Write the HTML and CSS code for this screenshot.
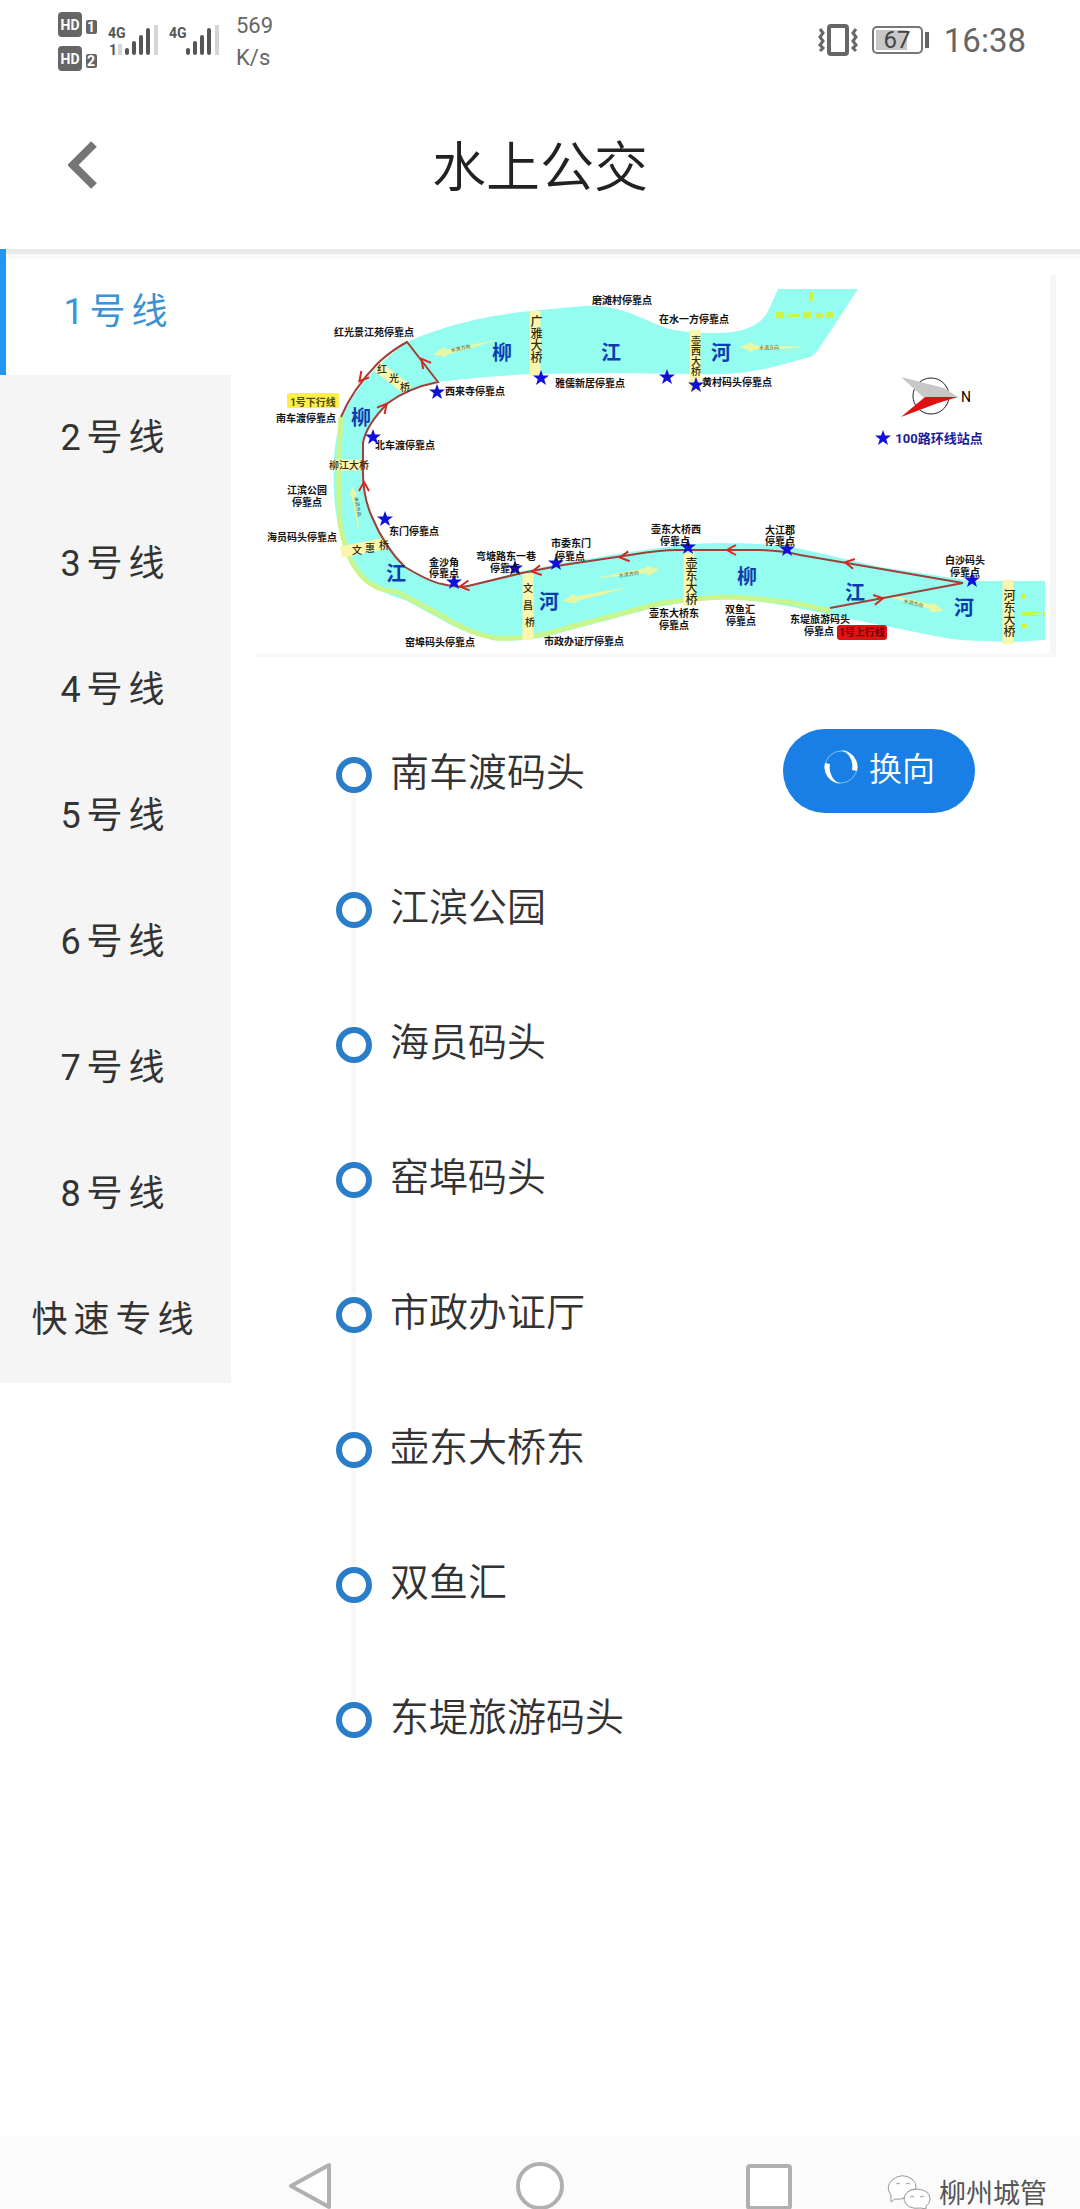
FILE: index.html
```html
<!DOCTYPE html>
<html lang="zh-CN">
<head>
  <meta charset="UTF-8">
  <meta name="viewport" content="width=device-width, initial-scale=1.0">
  <title>水上公交</title>
  <link rel="stylesheet" href="styles.css">
</head>
<body>
  <div class="statusbar">
    <div class="status-left">
      <svg class="hd" width="40" height="60" viewBox="0 0 40 60">
        <rect x="0" y="0" width="24" height="25" rx="4"/>
        <rect x="28" y="8" width="11" height="14" rx="2"/>
        <rect x="0" y="34" width="24" height="25" rx="4"/>
        <rect x="28" y="42" width="11" height="14" rx="2"/>
        <text x="12" y="18">HD</text>
        <text x="33" y="20">1</text>
        <text x="12" y="52">HD</text>
        <text x="33" y="54">2</text>
      </svg>
      <svg class="signal" width="52" height="34" viewBox="0 0 52 34">
        <text x="0" y="14">4G</text>
        <text x="1" y="31">1</text>
        <path class="faint" d="M12 20V31M48 1V31"/>
        <path d="M19 26V29M26 19V29M33 13V29M40 6V29"/>
      </svg>
      <svg class="signal" width="52" height="34" viewBox="0 0 52 34">
        <text x="0" y="14">4G</text>
        <path class="faint" d="M48 1V31"/>
        <path d="M19 26V29M26 19V29M33 13V29M40 6V29"/>
      </svg>
      <div class="speed">569<br>K/s</div>
    </div>
    <div class="status-right">
      <svg class="vibrate" width="40" height="32" viewBox="0 0 40 32">
        <rect x="11" y="2" width="18" height="28" rx="2"/>
        <path d="M2 5l3 4-3 4 3 4-3 4 3 3-3 3M38 5l-3 4 3 4-3 4 3 4-3 3 3 3"/>
      </svg>
      <svg class="battery" width="58" height="28" viewBox="0 0 58 28">
        <rect class="level" x="4" y="4" width="31" height="20"/>
        <rect class="case" x="1" y="1" width="49" height="26" rx="4"/>
        <rect class="tip" x="53" y="6" width="4" height="16"/>
        <text x="25" y="22">67</text>
      </svg>
      <span class="clock">16:38</span>
    </div>
  </div>

  <header class="header">
    <button class="back" aria-label="返回">
      <svg width="30" height="48" viewBox="0 0 30 48"><path d="M26 3L5 24L26 45"/></svg>
    </button>
    <h1>水上公交</h1>
  </header>

  <main class="main">
    <nav class="lines">
      <a href="#" class="active">1号线</a>
      <a href="#">2号线</a>
      <a href="#">3号线</a>
      <a href="#">4号线</a>
      <a href="#">5号线</a>
      <a href="#">6号线</a>
      <a href="#">7号线</a>
      <a href="#">8号线</a>
      <a href="#">快速专线</a>
    </nav>

    <section class="content">
      <svg class="map" viewBox="255 275 795 378" role="img" aria-label="1号线线路图">
        <defs>
          <path id="star" d="M0-8L2-2.500H8L3.200 1.200L5 7L0 3.500L-5 7L-3.200 1.200L-8-2.500H-2Z"/>
          <path id="arrow" d="M5-5L-4 0L5 5"/>
          <path id="flow" d="M-34 0L-22-5L-20-2L8-1L32 0L8 2L-20 3L-22 5Z"/>
        </defs>

        <!-- river -->
        <path class="river" d="M778 289H858L820 347Q815 355 810 357L777 366Q740 376 697 374L610 373L535 374Q485 376 438 382Q408 388 388 403Q366 425 363 443V465Q362 495 372 517Q385 548 405 567Q430 582 442 584Q460 588 468 586L522 571L563 563L630 552Q690 543 717 543Q780 543 810 551L880 567L973 581H1045V640Q1010 643 987 641Q960 641 940 637L830 615Q770 601 730 599Q700 599 657 607L563 632Q530 643 495 640Q465 634 442 620L405 600Q370 590 355 570Q335 535 334 490Q331 440 345 411Q362 375 407 342Q460 318 530 311L583 306Q605 304 630 313L663 327Q680 333 717 333Q760 333 770 307Z"/>
        <path class="bank" d="M341 417Q337 470 340 523Q346 556 357 570Q370 590 397 592L442 616Q470 634 495 638Q530 640 563 629L657 604Q700 597 730 597Q790 600 830 611"/>

        <!-- bridges -->
        <path class="bridge" d="M535 311V376M695 330V392M689 553V606M528 573V640M1008 580V644M341 552L387 543M378 367L408 390M334 465H364"/>

        <!-- flow direction -->
        <use href="#flow" class="flow" transform="translate(466 347) rotate(-13)"/>
        <use href="#flow" class="flow" transform="translate(774 347)"/>
        <use href="#flow" class="flow" transform="translate(356 510) rotate(80) scale(.7)"/>
        <use href="#flow" class="flow" transform="translate(626 574) rotate(172)"/>
        <use href="#flow" class="flow" transform="translate(596 594) rotate(-12)"/>
        <use href="#flow" class="flow" transform="translate(911 602) rotate(195)"/>
        <path class="mark" d="M809 292h4v9h-4zM776 312h8v6h-8zM788 314h12v3h-12zM803 312h8v6h-8zM816 313h7v5h-7zM826 312h7v6h-7zM1045 612l-13 2 13 2zM1021 594h5v5h-5zM1021 612h22v4h-22zM1022 624h5v4h-5z"/>
        <g class="tiny">
          <text x="461" y="350" transform="rotate(-13 461 350)">水流方向</text>
          <text x="769" y="349">水流方向</text>
          <text x="356" y="507" transform="rotate(80 356 507)">水流方向</text>
          <text x="629" y="576" transform="rotate(-8 629 576)">水流方向</text>
          <text x="913" y="605" transform="rotate(15 913 605)">水流方向</text>
        </g>

        <!-- route -->
        <path class="route" d="M341 417Q352 390 378 363Q392 350 407 342L438 382Q408 388 388 403Q366 425 363 443V465Q362 495 372 517Q385 548 405 567Q430 582 442 584Q460 588 468 586L522 573L563 565L630 555Q660 550 677 550H760Q785 551 800 555L963 583L830 608"/>
        <g class="arrows">
          <use href="#arrow" transform="translate(362 378) rotate(-50)"/>
          <use href="#arrow" transform="translate(424 362) rotate(52)"/>
          <use href="#arrow" transform="translate(384 407) rotate(130)"/>
          <use href="#arrow" transform="translate(364 486) rotate(90)"/>
          <use href="#arrow" transform="translate(464 586) rotate(-6)"/>
          <use href="#arrow" transform="translate(536 571) rotate(-10)"/>
          <use href="#arrow" transform="translate(624 557) rotate(-8)"/>
          <use href="#arrow" transform="translate(731 550)"/>
          <use href="#arrow" transform="translate(849 563) rotate(10)"/>
          <use href="#arrow" transform="translate(879 599) rotate(170)"/>
        </g>

        <g class="river-name">
          <text x="502" y="360">柳</text>
          <text x="611" y="360">江</text>
          <text x="721" y="360">河</text>
          <text x="361" y="425">柳</text>
          <text x="396" y="581">江</text>
          <text x="549" y="609">河</text>
          <text x="747" y="584">柳</text>
          <text x="855" y="600">江</text>
          <text x="964" y="615">河</text>
        </g>

        <g class="bridge-name">
          <text class="vertical" x="535" y="315">广雅大桥</text>
          <text class="vertical small" x="695" y="336">壶西大桥</text>
          <text class="vertical" x="690" y="557">壶东大桥</text>
          <text x="528" y="592">文</text>
          <text x="528" y="609">昌</text>
          <text x="530" y="626">桥</text>
          <text class="vertical" x="1008" y="589">河东大桥</text>
          <text x="349" y="469">柳江大桥</text>
          <text x="357" y="554">文</text>
          <text x="370" y="552">惠</text>
          <text x="384" y="549">桥</text>
          <text x="382" y="373">红</text>
          <text x="394" y="382">光</text>
          <text x="405" y="391">桥</text>
        </g>

        <g class="stars">
          <use href="#star" x="437" y="392"/>
          <use href="#star" x="373" y="437"/>
          <use href="#star" x="541" y="378"/>
          <use href="#star" x="667" y="377"/>
          <use href="#star" x="696" y="385"/>
          <use href="#star" x="385" y="519"/>
          <use href="#star" x="454" y="582"/>
          <use href="#star" x="515" y="568"/>
          <use href="#star" x="556" y="563"/>
          <use href="#star" x="688" y="547"/>
          <use href="#star" x="787" y="549"/>
          <use href="#star" x="972" y="580"/>
          <use href="#star" x="883" y="438"/>
        </g>

        <rect class="down-tag" x="287" y="393" width="52" height="15" rx="2"/>
        <rect class="up-tag" x="837" y="625" width="50" height="15" rx="3"/>
        <g class="stop">
          <text x="622" y="304">磨滩村停靠点</text>
          <text x="694" y="323">在水一方停靠点</text>
          <text x="590" y="387">雅儒新居停靠点</text>
          <text x="737" y="386">黄村码头停靠点</text>
          <text x="374" y="336">红光景江苑停靠点</text>
          <text x="475" y="395">西来寺停靠点</text>
          <text class="down-text" x="313" y="406">1号下行线</text>
          <text x="306" y="422">南车渡停靠点</text>
          <text x="405" y="449">北车渡停靠点</text>
          <text x="307" y="494">江滨公园</text>
          <text x="307" y="506">停靠点</text>
          <text x="302" y="541">海员码头停靠点</text>
          <text x="414" y="535">东门停靠点</text>
          <text x="444" y="566">金沙角</text>
          <text x="444" y="577">停靠点</text>
          <text x="506" y="560">弯塘路东一巷</text>
          <text x="505" y="572">停靠点</text>
          <text x="571" y="547">市委东门</text>
          <text x="570" y="560">停靠点</text>
          <text x="676" y="533">壶东大桥西</text>
          <text x="675" y="545">停靠点</text>
          <text x="780" y="534">大江郡</text>
          <text x="780" y="545">停靠点</text>
          <text x="965" y="564">白沙码头</text>
          <text x="965" y="576">停靠点</text>
          <text x="440" y="646">窑埠码头停靠点</text>
          <text x="584" y="645">市政办证厅停靠点</text>
          <text x="674" y="617">壶东大桥东</text>
          <text x="674" y="629">停靠点</text>
          <text x="740" y="613">双鱼汇</text>
          <text x="741" y="625">停靠点</text>
          <text x="820" y="623">东堤旅游码头</text>
          <text x="819" y="635">停靠点</text>
          <text class="up-text" x="862" y="636">1号上行线</text>
        </g>

        <!-- compass and legend -->
        <circle class="compass" cx="931" cy="396" r="18"/>
        <path fill="#c8c8c8" d="M901 377L944 388L958 397H923Z"/>
        <path fill="#e01010" d="M925 397H958L938 403L901 417Z"/>
        <text class="north" x="966" y="402">N</text>
        <text class="legend" x="939" y="443">100路环线站点</text>
      </svg>

      <div class="route-panel">
        <ul class="stations">
          <li>南车渡码头</li>
          <li>江滨公园</li>
          <li>海员码头</li>
          <li>窑埠码头</li>
          <li>市政办证厅</li>
          <li>壶东大桥东</li>
          <li>双鱼汇</li>
          <li>东堤旅游码头</li>
        </ul>
        <button class="switch">
          <svg width="36" height="36" viewBox="0 0 36 36">
            <circle cx="18" cy="18" r="16"/>
            <path d="M18 1A17 17 0 0 1 34 22L29 21A15 17 0 0 0 18 1ZM2 14L7 15A15 17 0 0 0 18 35A17 17 0 0 1 2 14Z"/>
          </svg>
          换向
        </button>
      </div>
    </section>
  </main>

  <footer class="navbar">
    <button aria-label="后退"><svg width="48" height="50" viewBox="0 0 48 50"><path d="M42 4V46L4 25Z"/></svg></button>
    <button aria-label="主页"><svg width="48" height="50" viewBox="0 0 48 50"><circle cx="24" cy="25" r="22"/></svg></button>
    <button aria-label="最近任务"><svg width="48" height="50" viewBox="0 0 48 50"><rect x="3" y="5" width="42" height="42" rx="2"/></svg></button>
    <div class="watermark">
      <svg width="46" height="34" viewBox="0 0 46 34">
        <path d="M17 23Q12 25 8 24L4 27V20Q-2 12 5 5Q15-3 25 4Q30 8 29 14Q20 14 17 23Z"/>
        <path d="M30 14Q43 15 43 24Q43 29 39 31V34L34 33Q20 35 17 25Q17 15 30 14Z"/>
        <path d="M9 9q2-2 4 0M19 9q2-2 4 0M23 22q2-2 4 0M33 22q2-2 4 0"/>
      </svg>
      <span>柳州城管</span>
    </div>
  </footer>
</body>
</html>
```

FILE: styles.css
```css
*,
*::before,
*::after {
  box-sizing: border-box;
}
body {
  margin: 0;
  min-height: 100vh;
  display: flex;
  flex-direction: column;
  background: #fff;
  color: #333;
  font-family: Roboto, "Noto Sans CJK SC", sans-serif;
}
button {
  border: none;
  background: none;
  padding: 0;
  font-family: inherit;
  cursor: pointer;
}
svg {
  display: block;
}

/* status bar */
.statusbar {
  height: 84px;
  padding: 12px 54px 0 58px;
  display: flex;
  justify-content: space-between;
  align-items: flex-start;
  color: #666;
}
.status-left,
.status-right {
  display: flex;
}
.status-left {
  gap: 10px;
}
.status-right {
  gap: 14px;
  padding-top: 12px;
}
.hd rect {
  fill: #666;
}
.hd text {
  fill: #fff;
  font-size: 14px;
  font-weight: 700;
  text-anchor: middle;
}
.signal {
  margin-top: 12px;
}
.signal + .signal {
  margin-left: -1px;
}
.signal text {
  fill: #555;
  font-size: 14px;
  font-weight: 700;
}
.signal path {
  stroke: #555;
  stroke-width: 4;
  stroke-linecap: round;
  fill: none;
}
.signal .faint {
  stroke: #d5d5d5;
  stroke-linecap: butt;
}
.speed {
  margin-left: 5px;
  font-size: 22px;
  line-height: 32px;
  margin-top: -2px;
}
.vibrate rect {
  fill: none;
  stroke: #666;
  stroke-width: 4;
}
.vibrate path {
  fill: none;
  stroke: #666;
  stroke-width: 3;
}
.battery {
  margin-top: 2px;
}
.battery .level {
  fill: #c8c8c8;
}
.battery .case {
  fill: none;
  stroke: #777;
  stroke-width: 2;
}
.battery .tip {
  fill: #666;
}
.battery text {
  fill: #444;
  font-size: 24px;
  text-anchor: middle;
}
.clock {
  font-size: 33px;
  line-height: 34px;
}

/* title */
.header {
  position: relative;
  height: 165px;
  padding-top: 4px;
  display: flex;
  align-items: center;
  justify-content: center;
}
.header h1 {
  margin: 0;
  font-size: 54px;
  line-height: 80px;
  font-weight: 350;
  color: #222;
}
.back {
  position: absolute;
  left: 68px;
  top: 57px;
}
.back path {
  fill: none;
  stroke: #757575;
  stroke-width: 8;
}

.main {
  flex: 1;
  display: flex;
  align-items: flex-start;
  box-shadow: inset 0 5px 0 #e8e8e8, inset 0 10px 0 #fafafa;
}

/* line list */
.lines {
  width: 231px;
  background: #f5f5f5;
}
.lines a {
  display: block;
  height: 126px;
  line-height: 126px;
  text-align: center;
  font-size: 36px;
  letter-spacing: 6px;
  color: #333;
  text-decoration: none;
}
.lines .active {
  background: #fff;
  border-left: 6px solid #2196f3;
  color: #3d92d0;
  box-shadow: inset 0 5px 0 #e8e8e8, inset 0 10px 0 #fafafa;
}

.content {
  flex: 1;
  padding: 26px 24px 0;
}

/* map */
.map {
  width: 100%;
  border-right: 6px solid #f6f6f6;
  border-bottom: 4px solid #f9f9f9;
}
.map text {
  text-anchor: middle;
}
.river {
  fill: #94fdf0;
}
.bank {
  fill: none;
  stroke: #c8f58c;
  stroke-width: 5;
}
.bridge {
  fill: none;
  stroke: #fbf6ae;
  stroke-width: 11;
}
.flow {
  fill: #e6f7a6;
}
.mark {
  fill: #cdf53e;
}
.tiny {
  font-size: 5px;
  fill: #355;
}
.route {
  fill: none;
  stroke: #a0403a;
  stroke-width: 2;
}
.arrows {
  fill: none;
  stroke: #d8261c;
  stroke-width: 2;
}
.river-name {
  font-size: 20px;
  font-weight: 700;
  fill: #0d3cae;
}
.bridge-name {
  font-size: 10px;
  font-weight: 500;
  fill: #2c2a10;
}
.map .vertical {
  writing-mode: vertical-rl;
  text-anchor: start;
  font-size: 12px;
}
.map .small {
  font-size: 10px;
}
.stars {
  fill: #1010d8;
}
.stop {
  font-size: 10px;
  font-weight: 700;
  fill: #111;
}
.down-tag {
  fill: #fbf04a;
}
.down-text {
  fill: #4d4a10;
}
.up-tag {
  fill: #e01212;
}
.up-text {
  fill: #6a0505;
}
.compass {
  fill: none;
  stroke: #222;
  stroke-width: 1;
}
.north {
  font-size: 14px;
}
.legend {
  font-size: 13px;
  font-weight: 700;
  fill: #1c1c9c;
}

/* stations */
.route-panel {
  display: flex;
  justify-content: space-between;
  align-items: flex-start;
  margin-top: 49px;
  padding: 0 81px;
}
.stations {
  list-style: none;
  margin: 0;
  padding: 0;
}
.stations li {
  position: relative;
  display: flex;
  align-items: center;
  gap: 18px;
  height: 135px;
  padding-bottom: 10px;
  font-size: 39px;
  font-weight: 350;
}
.stations li::before {
  content: "";
  width: 36px;
  height: 36px;
  margin-top: 12px;
  border: 6px solid #2a7dc8;
  border-radius: 50%;
}
.stations li + li::after {
  content: "";
  position: absolute;
  left: 15px;
  bottom: 86px;
  width: 5px;
  height: 97px;
  background: #f7f7f7;
}
.switch {
  display: flex;
  align-items: center;
  justify-content: center;
  gap: 10px;
  width: 192px;
  height: 84px;
  margin-top: 23px;
  padding-bottom: 8px;
  border-radius: 42px;
  background: #1a7fe4;
  color: #fff;
  font-size: 33px;
  font-weight: 350;
}
.switch circle {
  fill: none;
  stroke: #7fc0f5;
  stroke-width: 1;
}
.switch path {
  fill: #fff;
}

/* system bar */
.navbar {
  position: relative;
  height: 73px;
  padding-top: 25px;
  display: flex;
  justify-content: center;
  gap: 181px;
  background: #fbfbfb;
  overflow: hidden;
}
.navbar button path,
.navbar button circle,
.navbar button rect {
  fill: #fff;
  stroke: #b0b0b0;
  stroke-width: 4;
  stroke-linejoin: round;
}
.watermark {
  position: absolute;
  right: 33px;
  bottom: 0;
  display: flex;
  align-items: flex-end;
  gap: 6px;
  font-size: 27px;
  line-height: 30px;
  color: #555;
}
.watermark path {
  fill: #fff;
  stroke: #999;
  stroke-width: 1;
}
```
